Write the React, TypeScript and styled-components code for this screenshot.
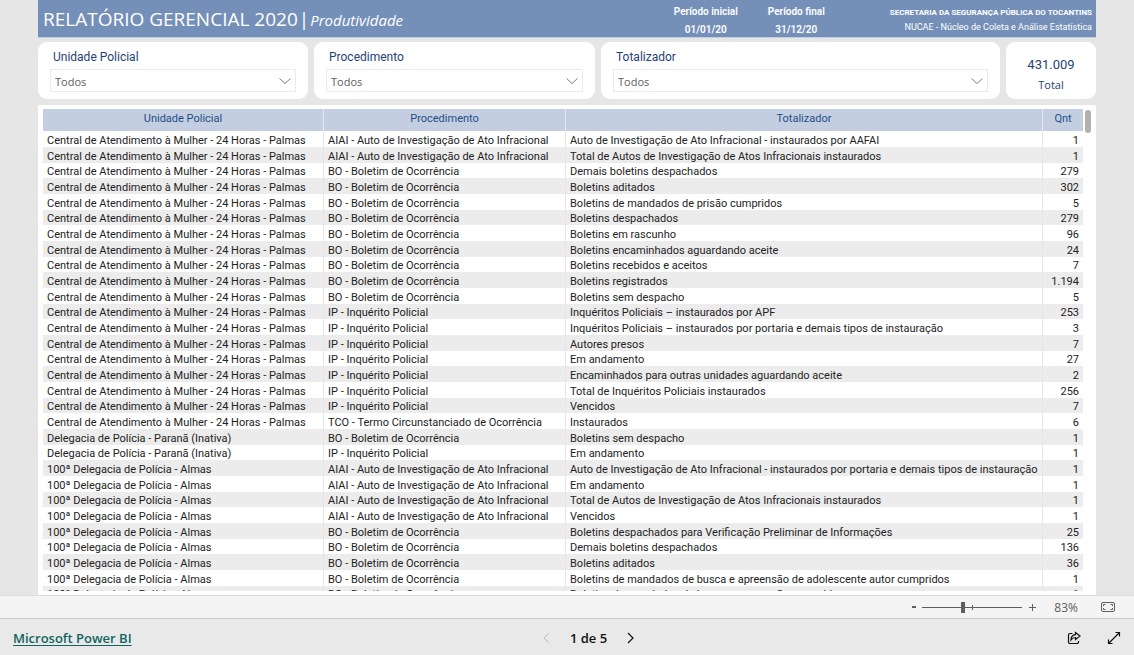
import React from "react";
import styled, { createGlobalStyle } from "styled-components";

const GlobalStyle = createGlobalStyle`
  * { box-sizing: border-box; }
  body {
    margin: 0;
    background: #e6e6e6;
    font-family: "Open Sans", "Noto Sans", sans-serif;
    color: #222;
  }
  button, select, input { font-family: inherit; }
`;

const Page = styled.div`
  display: flex;
  flex-direction: column;
  height: 100vh;
  overflow: hidden;
`;

const Report = styled.main`
  flex: 1;
  min-height: 0;
  display: flex;
  flex-direction: column;
  margin: 0 38px;
`;

const Banner = styled.header`
  display: flex;
  justify-content: space-between;
  height: 38px;
  padding: 0 4px 0 5px;
  background: #7590b8;
  border-bottom: 1px solid #c3cfe2;
  color: #fff;
  white-space: nowrap;
`;

const Title = styled.h1`
  flex: 1;
  display: flex;
  align-items: baseline;
  gap: 1px;
  margin: 0;
  font-size: 19px;
  line-height: 38px;
  font-weight: 400;
`;

const Subtitle = styled.em`
  font-size: 15px;
`;

const Periods = styled.dl`
  display: flex;
  gap: 30px;
  margin: 0 65px 0 0;
  font-family: Roboto, sans-serif;
  font-size: 10px;
  line-height: 18px;
  font-weight: 600;
  text-align: center;
`;

const Period = styled.div`
  padding-top: 3px;
  dd { margin: 0; }
`;

const Agency = styled.p`
  margin: 0;
  padding-top: 6px;
  font-family: Roboto, sans-serif;
  font-size: 9px;
  line-height: 14px;
  text-align: right;
`;

const AgencyName = styled.strong`
  display: block;
  font-size: 8px;
  font-weight: 700;
`;

const Filters = styled.section`
  display: grid;
  grid-template-columns: 270fr 281fr 399fr 90fr;
  gap: 6px;
  margin: 4px 0 6px;
`;

const Card = styled.div`
  display: flex;
  flex-direction: column;
  height: 57px;
  padding: 8px 12px 0;
  background: #fff;
  border-radius: 9px;
  color: #1f4372;
`;

const SlicerLabel = styled.label`
  padding-left: 3px;
  font-family: Roboto, sans-serif;
  font-size: 12px;
  line-height: 15px;
`;

const SelectBox = styled.div`
  display: flex;
  align-items: center;
  height: 23px;
  margin-top: 4px;
  padding-right: 4px;
  border: 1px solid #eaeaea;
`;

const Select = styled.select`
  appearance: none;
  flex: 1;
  height: 21px;
  margin-right: -16px;
  padding: 2px 20px 0 4px;
  border: 0;
  background: transparent;
  color: #605e5c;
  font-size: 11px;
`;

const Chevron = styled.svg`
  flex: none;
  fill: none;
  stroke: #808080;
  pointer-events: none;
`;

const TotalCard = styled(Card)`
  align-items: center;
  padding: 14px 0 0;
`;

const TotalValue = styled.span`
  font-family: Roboto, sans-serif;
  font-size: 13px;
  line-height: 18px;
`;

const TotalLabel = styled.span`
  font-size: 11px;
  line-height: 22px;
`;

const TablePanel = styled.section`
  flex: 1;
  min-height: 0;
  display: flex;
  padding: 4px 5px;
  background: #fff;
`;

const TableView = styled.div`
  flex: 1;
  overflow: hidden;
`;

const Table = styled.table`
  width: 100%;
  table-layout: fixed;
  border-collapse: separate;
  border-spacing: 0;
  font-family: Roboto, sans-serif;
  font-size: 11px;
  line-height: 13px;
  white-space: nowrap;
`;

const Column = styled.col<{ $width?: number }>`
  width: ${(p) => (p.$width ? `${p.$width}px` : "auto")};
`;

const HeadCell = styled.th`
  height: 22px;
  padding: 0 0 4px;
  background: #c3cfe1;
  border-right: 1px solid #e6e8ee;
  color: #1f4e86;
  font-weight: 400;
  &:last-child { border-right: 0; }
`;

const Row = styled.tr`
  height: 16px;
  &:nth-child(3n) { height: 15px; }
  &:nth-child(even) { background: #ececec; }
`;

const Cell = styled.td`
  padding: 2px 4px 0;
  border-right: 1px solid #e6e6e6;
`;

const NumberCell = styled(Cell)`
  border-right: 0;
  text-align: right;
`;

const ScrollTrack = styled.div`
  width: 8px;
  padding: 1px 0 0 2px;
`;

const ScrollThumb = styled.div`
  width: 6px;
  height: 23px;
  border-radius: 3px;
  background: #b3b0ad;
`;

const ZoomBar = styled.div`
  display: flex;
  align-items: center;
  justify-content: flex-end;
  height: 24px;
  padding-right: 18px;
  background: #f4f4f4;
  border-top: 1px solid #dcdcdc;
  border-bottom: 1px solid #c8c8c8;
  color: #605e5c;
`;

const IconButton = styled.button`
  display: flex;
  align-items: center;
  justify-content: center;
  width: 16px;
  height: 20px;
  padding: 0;
  border: 0;
  background: none;
  color: #111;
  &:disabled { color: #bdbdbd; }
  svg { fill: none; stroke: currentColor; }
`;

const ZoomButton = styled(IconButton)`
  color: #605e5c;
`;

const ZoomSlider = styled.input`
  appearance: none;
  width: 100px;
  height: 12px;
  margin: 0 2px;
  background:
    linear-gradient(#605e5c, #605e5c) 50px 50% / 1px 5px no-repeat,
    linear-gradient(#605e5c, #605e5c) 0 50% / 100% 1px no-repeat;
  &::-webkit-slider-thumb {
    appearance: none;
    width: 4px;
    height: 11px;
    background: #605e5c;
  }
`;

const ZoomLevel = styled.output`
  width: 38px;
  margin-right: 22px;
  font-size: 12px;
  text-align: right;
`;

const Footer = styled.footer`
  display: grid;
  grid-template-columns: 1fr auto 1fr;
  align-items: center;
  height: 36px;
  padding: 2px 12px 0 13px;
  background: #e9e9e9;
`;

const BrandLink = styled.a`
  justify-self: start;
  color: #11655f;
  font-size: 13px;
  font-weight: 600;
  text-underline-offset: 2px;
`;

const Pager = styled.nav`
  display: flex;
  align-items: center;
  gap: 15px;
  margin-right: -42px;
  font-size: 13px;
  font-weight: 600;
  color: #111;
`;

const Actions = styled.div`
  display: flex;
  justify-content: flex-end;
  gap: 24px;
`;

const central = "Central de Atendimento à Mulher - 24 Horas - Palmas";
const parana = "Delegacia de Polícia - Paranã (Inativa)";
const almas = "100ª Delegacia de Polícia - Almas";
const aiai = "AIAI - Auto de Investigação de Ato Infracional";
const bo = "BO - Boletim de Ocorrência";
const ip = "IP - Inquérito Policial";
const tco = "TCO - Termo Circunstanciado de Ocorrência";

const rows: [string, string, string, string][] = [
  [central, aiai, "Auto de Investigação de Ato Infracional - instaurados por AAFAI", "1"],
  [central, aiai, "Total de Autos de Investigação de Atos Infracionais instaurados", "1"],
  [central, bo, "Demais boletins despachados", "279"],
  [central, bo, "Boletins aditados", "302"],
  [central, bo, "Boletins de mandados de prisão cumpridos", "5"],
  [central, bo, "Boletins despachados", "279"],
  [central, bo, "Boletins em rascunho", "96"],
  [central, bo, "Boletins encaminhados aguardando aceite", "24"],
  [central, bo, "Boletins recebidos e aceitos", "7"],
  [central, bo, "Boletins registrados", "1.194"],
  [central, bo, "Boletins sem despacho", "5"],
  [central, ip, "Inquéritos Policiais – instaurados por APF", "253"],
  [central, ip, "Inquéritos Policiais – instaurados por portaria e demais tipos de instauração", "3"],
  [central, ip, "Autores presos", "7"],
  [central, ip, "Em andamento", "27"],
  [central, ip, "Encaminhados para outras unidades aguardando aceite", "2"],
  [central, ip, "Total de Inquéritos Policiais instaurados", "256"],
  [central, ip, "Vencidos", "7"],
  [central, tco, "Instaurados", "6"],
  [parana, bo, "Boletins sem despacho", "1"],
  [parana, ip, "Em andamento", "1"],
  [almas, aiai, "Auto de Investigação de Ato Infracional - instaurados por portaria e demais tipos de instauração", "1"],
  [almas, aiai, "Em andamento", "1"],
  [almas, aiai, "Total de Autos de Investigação de Atos Infracionais instaurados", "1"],
  [almas, aiai, "Vencidos", "1"],
  [almas, bo, "Boletins despachados para Verificação Preliminar de Informações", "25"],
  [almas, bo, "Demais boletins despachados", "136"],
  [almas, bo, "Boletins aditados", "36"],
  [almas, bo, "Boletins de mandados de busca e apreensão de adolescente autor cumpridos", "1"],
  [almas, bo, "Boletins de mandados de busca e apreensão cumpridos", "1"],
];

function Slicer({ id, label }: { id: string; label: string }) {
  return (
    <Card>
      <SlicerLabel htmlFor={id}>{label}</SlicerLabel>
      <SelectBox>
        <Select id={id} defaultValue="Todos">
          <option>Todos</option>
        </Select>
        <Chevron width="12" height="8" viewBox="0 0 12 8">
          <path d="M.5 1.5 6 6.5l5.500-5" />
        </Chevron>
      </SelectBox>
    </Card>
  );
}

export default function App() {
  return (
    <Page>
      <GlobalStyle />
      <Report>
        <Banner>
          <Title>
            <span>RELATÓRIO GERENCIAL 2020</span>
            <span>|</span>
            <Subtitle>Produtividade</Subtitle>
          </Title>
          <Periods>
            <Period>
              <dt>Período inicial</dt>
              <dd>01/01/20</dd>
            </Period>
            <Period>
              <dt>Período final</dt>
              <dd>31/12/20</dd>
            </Period>
          </Periods>
          <Agency>
            <AgencyName>SECRETARIA DA SEGURANÇA PÚBLICA DO TOCANTINS</AgencyName>
            NUCAE - Núcleo de Coleta e Análise Estatística
          </Agency>
        </Banner>

        <Filters>
          <Slicer id="unidade" label="Unidade Policial" />
          <Slicer id="procedimento" label="Procedimento" />
          <Slicer id="totalizador" label="Totalizador" />
          <TotalCard>
            <TotalValue>431.009</TotalValue>
            <TotalLabel>Total</TotalLabel>
          </TotalCard>
        </Filters>

        <TablePanel>
          <TableView>
            <Table>
              <colgroup>
                <Column $width={281} />
                <Column $width={242} />
                <Column />
                <Column $width={40} />
              </colgroup>
              <thead>
                <tr>
                  <HeadCell scope="col">Unidade Policial</HeadCell>
                  <HeadCell scope="col">Procedimento</HeadCell>
                  <HeadCell scope="col">Totalizador</HeadCell>
                  <HeadCell scope="col">Qnt</HeadCell>
                </tr>
              </thead>
              <tbody>
                {rows.map(([unit, procedure, counter, amount], i) => (
                  <Row key={i}>
                    <Cell>{unit}</Cell>
                    <Cell>{procedure}</Cell>
                    <Cell>{counter}</Cell>
                    <NumberCell>{amount}</NumberCell>
                  </Row>
                ))}
              </tbody>
            </Table>
          </TableView>
          <ScrollTrack>
            <ScrollThumb />
          </ScrollTrack>
        </TablePanel>
      </Report>

      <ZoomBar>
        <ZoomButton aria-label="Diminuir zoom">
          <svg width="8" height="8" viewBox="0 0 8 8" strokeWidth="2">
            <path d="M4 4h4" />
          </svg>
        </ZoomButton>
        <ZoomSlider type="range" min={0} max={100} defaultValue={41} aria-label="Zoom" />
        <ZoomButton aria-label="Aumentar zoom">
          <svg width="9" height="9" viewBox="0 0 9 9">
            <path d="M1 4.500h7M4.500 1v7" />
          </svg>
        </ZoomButton>
        <ZoomLevel>83%</ZoomLevel>
        <ZoomButton aria-label="Ajustar à página">
          <svg width="14" height="10" viewBox="0 0 14 10">
            <rect x=".5" y=".5" width="13" height="9" rx="1.500" />
            <path d="M4.500 2.500h-2v1.500M2.500 6v1.500h2M9.500 2.500h2v1.500M11.500 6v1.500h-2" />
          </svg>
        </ZoomButton>
      </ZoomBar>

      <Footer>
        <BrandLink href="#">Microsoft Power BI</BrandLink>
        <Pager>
          <IconButton disabled aria-label="Página anterior">
            <svg width="7" height="12" viewBox="0 0 7 12">
              <path d="M6 1 1 6l5 5" />
            </svg>
          </IconButton>
          <span>1 de 5</span>
          <IconButton aria-label="Próxima página">
            <svg width="7" height="12" viewBox="0 0 7 12" strokeWidth="1.200">
              <path d="m1 1 5 5-5 5" />
            </svg>
          </IconButton>
        </Pager>
        <Actions>
          <IconButton aria-label="Compartilhar">
            <svg width="14" height="14" viewBox="0 0 14 14" strokeWidth="1.200">
              <path d="M5.500 2.500H3A1.500 1.500 0 0 0 1.500 4v7A1.500 1.500 0 0 0 3 12.500h7a1.500 1.500 0 0 0 1.500-1.500v-1" />
              <path d="M8.500 1.500 13 5 8.500 8.500v-2C6.500 6.500 5 7.500 4 9c0-3 1.700-5 4.500-5.300z" />
            </svg>
          </IconButton>
          <IconButton aria-label="Tela inteira">
            <svg width="14" height="14" viewBox="0 0 14 14" strokeWidth="1.200">
              <path d="M8.500 1.500h4v4M12.500 1.500l-11 11M1.500 8.500v4h4" />
            </svg>
          </IconButton>
        </Actions>
      </Footer>
    </Page>
  );
}
